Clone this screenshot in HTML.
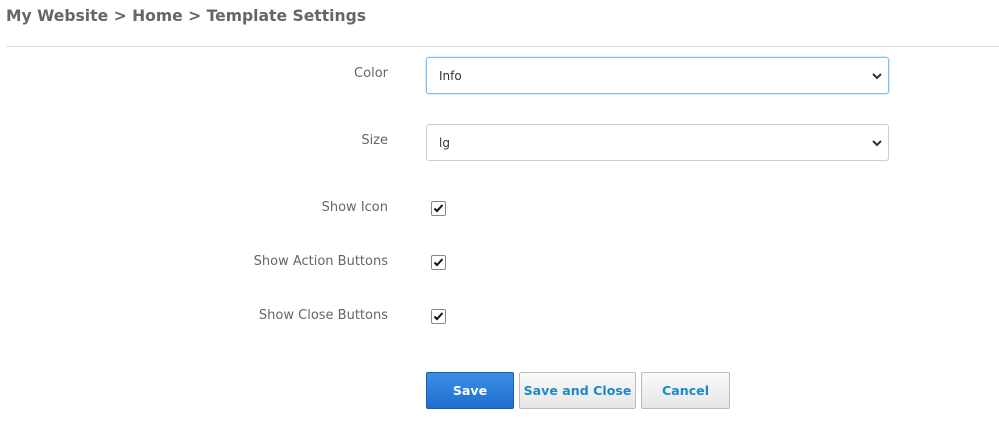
<!DOCTYPE html>
<html><head><style>
body{margin:0;width:999px;height:427px;background:#fff;font-family:"DejaVu Sans","Liberation Sans",sans-serif;position:relative;overflow:hidden}
.t{position:absolute;left:6px;top:7px;font-size:15.6px;font-weight:bold;color:#666}
.hr{position:absolute;left:6px;right:0;top:46px;height:1px;background:#ddd}
.l{position:absolute;right:611px;font-size:13px;color:#666;white-space:nowrap}
.s{position:absolute;left:426px;width:463px;height:37px;border:1px solid #ccc;border-radius:3px;box-sizing:border-box;font-size:12px;color:#333;padding:11px 12px}
.s svg{position:absolute;right:6px;top:15px}
.c{position:absolute;left:431px;width:13px;height:13px;border:1px solid #888;border-radius:2px;background:#fff}
.c svg{position:absolute;left:1px;top:1px}
.b{position:absolute;top:372px;height:37px;box-sizing:border-box;border:1px solid #bbb;border-radius:2px;background:linear-gradient(#fafafa,#e6e6e6);color:#1a8ac7;font-weight:bold;font-size:12.6px;text-align:center;line-height:35px;white-space:nowrap}
</style></head><body>
<div class="t">My Website &gt; Home &gt; Template Settings</div>
<div class="hr"></div>
<div class="l" style="top:66px">Color</div>
<div class="s" style="top:57px;border-color:#7fbdf0;box-shadow:0 0 2px #9cd">Info<svg width="10" height="7"><path d="M1 1L5 5L9 1" stroke="#333" stroke-width="2" fill="none"/></svg></div>
<div class="l" style="top:133px">Size</div>
<div class="s" style="top:124px">lg<svg width="10" height="7"><path d="M1 1L5 5L9 1" stroke="#333" stroke-width="2" fill="none"/></svg></div>
<div class="l" style="top:200px">Show Icon</div>
<div class="c" style="top:201px"><svg width="11" height="11"><path d="M1.5 5.5L4 8L9.5 2" stroke="#111" stroke-width="2" fill="none"/></svg></div>
<div class="l" style="top:254px">Show Action Buttons</div>
<div class="c" style="top:255px"><svg width="11" height="11"><path d="M1.5 5.5L4 8L9.5 2" stroke="#111" stroke-width="2" fill="none"/></svg></div>
<div class="l" style="top:308px">Show Close Buttons</div>
<div class="c" style="top:309px"><svg width="11" height="11"><path d="M1.5 5.5L4 8L9.5 2" stroke="#111" stroke-width="2" fill="none"/></svg></div>
<div class="b" style="left:426px;width:88px;background:linear-gradient(#3a8ee6,#1f6fcf);border-color:#1a5fb0;color:#fff">Save</div>
<div class="b" style="left:519px;width:117px">Save and Close</div>
<div class="b" style="left:641px;width:89px">Cancel</div>
</body></html>
